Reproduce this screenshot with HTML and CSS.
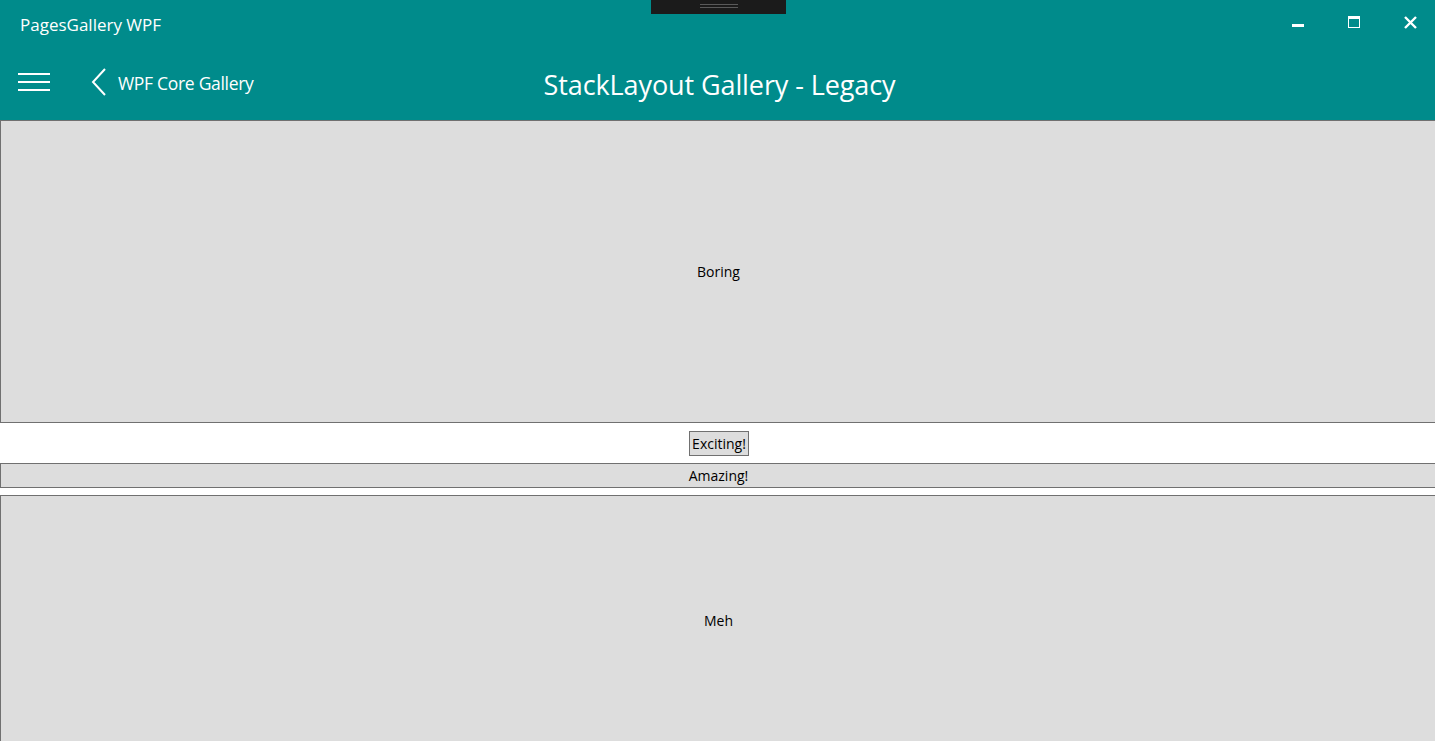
FILE: index.html
```html
<!DOCTYPE html>
<html>
<head>
<meta charset="utf-8">
<link rel="stylesheet" href="styles.css">
</head>
<body>
<div class="header">
  <div class="titlebar">
    <span class="app-title">PagesGallery WPF</span>
    <div class="grip"><span class="grip-line"></span><span class="grip-line"></span></div>
    <div class="controls">
      <svg class="ctl" width="12" height="12" viewBox="0 0 12 12"><rect x="0" y="8" width="12" height="3" fill="#fff"/></svg>
      <svg class="ctl" width="12" height="12" viewBox="0 0 12 12"><rect x="0.5" y="0.5" width="11" height="11" fill="none" stroke="#fff" stroke-width="1"/><rect x="0" y="0" width="12" height="3" fill="#fff"/></svg>
      <svg class="ctl" width="13" height="13" viewBox="0 0 13 13"><path d="M1 1 L12 12 M12 1 L1 12" stroke="#fff" stroke-width="2.4" fill="none"/></svg>
    </div>
  </div>
  <div class="navbar">
    <svg class="hamburger" width="32" height="20" viewBox="0 0 32 20"><rect x="0" y="1" width="32" height="2" fill="#fff"/><rect x="0" y="9" width="32" height="2" fill="#fff"/><rect x="0" y="17" width="32" height="2" fill="#fff"/></svg>
    <svg class="back" width="16" height="28" viewBox="0 0 16 28"><polyline points="14,1 2,14 14,27" fill="none" stroke="#fff" stroke-width="2"/></svg>
    <span class="back-text">WPF Core Gallery</span>
    <span class="page-title">StackLayout Gallery - Legacy</span>
  </div>
</div>
<div class="content">
  <div class="box big">Boring</div>
  <div class="row"><span class="button">Exciting!</span></div>
  <div class="box thin">Amazing!</div>
  <div class="box meh">Meh</div>
</div>
</body>
</html>
```
FILE: styles.css
```css
html, body {
  margin: 0;
  padding: 0;
  height: 100%;
  overflow: hidden;
  background: #ffffff;
  font-family: "Open Sans", "Noto Sans", sans-serif;
}
.header {
  background: #008b8b;
  height: 120px;
  color: #fff;
}
.titlebar {
  height: 48px;
  display: flex;
  align-items: center;
  position: relative;
}
.app-title {
  margin-left: 20px;
  font-size: 17px;
  letter-spacing: 0;
  margin-top: 1px;
}
.grip {
  position: absolute;
  left: 651px;
  top: 0;
  width: 135px;
  height: 14px;
  background: #1b1b1b;
  display: flex;
  flex-direction: column;
  align-items: center;
  padding-top: 4px;
  box-sizing: border-box;
  gap: 2px;
}
.grip-line {
  width: 38px;
  height: 1px;
  background: #5a5a5a;
}
.controls {
  margin-left: auto;
  display: flex;
  align-items: center;
  gap: 44px;
  margin-right: 18px;
  margin-top: -4px;
}
.ctl { display: block; }
.navbar {
  height: 72px;
  display: flex;
  align-items: center;
  position: relative;
}
.hamburger {
  margin-left: 18px;
  margin-top: -4px;
}
.back {
  margin-left: 41px;
  margin-top: -4px;
}
.back-text {
  margin-left: 11px;
  font-size: 17.5px;
  margin-top: -3px;
  letter-spacing: -0.3px;
}
.page-title {
  position: absolute;
  left: 0;
  right: 0;
  text-align: center;
  font-size: 27px;
  letter-spacing: -0.1px;
  top: 18px;
  padding-left: 4px;
}
.content {
  display: flex;
  flex-direction: column;
}
.box {
  box-sizing: border-box;
  width: 1440px;
  background: #dddddd;
  border: 1px solid #707070;
  display: flex;
  align-items: center;
  justify-content: center;
  font-size: 14px;
  color: #000;
  letter-spacing: 0;
}
.box.big {
  height: 303px;
  padding-right: 3px;
  padding-bottom: 1px;
}
.box.thin {
  height: 25px;
  padding-right: 3px;
}
.box.meh {
  margin-top: 7px;
  height: 246px;
  border-bottom: none;
  align-items: flex-start;
  padding-top: 115px;
  padding-right: 3px;
}
.row {
  height: 40px;
  display: flex;
  align-items: center;
  justify-content: center;
}
.button {
  box-sizing: border-box;
  height: 25px;
  width: 60px;
  border: 1px solid #707070;
  background: #dddddd;
  font-size: 14px;
  letter-spacing: 0;
  display: flex;
  align-items: center;
  justify-content: center;
  margin-left: 3px;
  white-space: nowrap;
}
```
